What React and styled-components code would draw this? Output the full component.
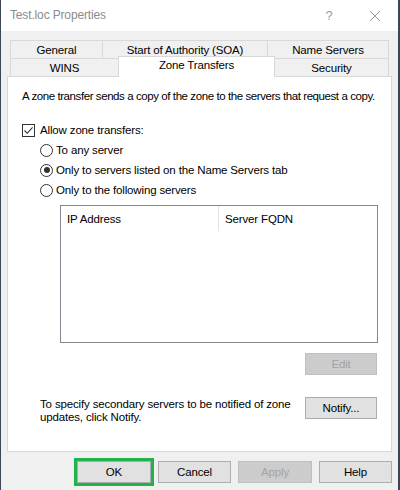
import React from "react";
import styled, { createGlobalStyle, css } from "styled-components";

const GlobalStyle = createGlobalStyle`
  html, body {
    margin: 0;
    padding: 0;
    background: #3c4656;
  }
  body {
    font-family: "Liberation Sans", Arial, sans-serif;
    font-size: 11.5px;
    letter-spacing: -0.15px;
    color: #000;
  }
`;

const Window = styled.div`
  width: 397px;
  height: 490px;
  margin-left: 1px;
  background: #f0f0f0;
  display: flex;
  flex-direction: column;
  box-sizing: border-box;
`;

const TitleBar = styled.div`
  height: 31px;
  background: #fff;
  display: flex;
  align-items: center;
  padding-left: 9px;
  flex-shrink: 0;
`;

const Title = styled.div`
  flex: 1;
  color: #8c8c8c;
  font-size: 12px;
  padding-bottom: 1px;
`;

const TitleButton = styled.div`
  width: 46px;
  height: 31px;
  display: flex;
  align-items: center;
  justify-content: center;
  color: #9a9a9a;
  font-size: 13px;
`;

const Body = styled.div`
  flex: 1;
  padding: 9px 6px 0 6px;
  display: flex;
  flex-direction: column;
`;

const TabStrip = styled.div`
  display: flex;
  flex-direction: column;
  padding: 0 3px;
  position: relative;
  z-index: 1;
`;

const TabRow = styled.div`
  display: flex;
  height: 18px;
`;

const Tab = styled.div`
  width: ${(p) => p.$w}px;
  box-sizing: border-box;
  border: 1px solid #d9d9d9;
  border-bottom: none;
  margin-left: -1px;
  background: #f0f0f0;
  display: flex;
  align-items: center;
  justify-content: center;
  padding-top: 1px;
  &:first-child {
    margin-left: 0;
  }
  ${(p) =>
    p.$active &&
    css`
      background: #fff;
      height: 21px;
      margin-top: -2px;
      position: relative;
      z-index: 2;
      align-items: flex-start;
      padding-top: 2px;
    `}
`;

const Panel = styled.div`
  height: 376px;
  box-sizing: border-box;
  background: #fff;
  border: 1px solid #d9d9d9;
  padding: 13px 0 0 14px;
  display: flex;
  flex-direction: column;
`;

const Intro = styled.div`
  white-space: nowrap;
  letter-spacing: -0.42px;
  margin-bottom: 19px;
`;

const CheckRow = styled.label`
  display: flex;
  align-items: center;
  gap: 5px;
  height: 18px;
  margin-bottom: 1px;
`;

const CheckBox = styled.span`
  width: 11px;
  height: 11px;
  border: 1px solid #333;
  display: flex;
  align-items: center;
  justify-content: center;
`;

const Options = styled.div`
  display: flex;
  flex-direction: column;
  padding-left: 18px;
`;

const RadioRow = styled.label`
  display: flex;
  align-items: center;
  gap: 3px;
  height: 20px;
`;

const Radio = styled.span`
  width: 11px;
  height: 11px;
  border: 1px solid #333;
  border-radius: 50%;
  display: flex;
  align-items: center;
  justify-content: center;
  &::after {
    content: "";
    width: 6px;
    height: 6px;
    border-radius: 50%;
    background: ${(p) => (p.$checked ? "#333" : "transparent")};
  }
`;

const ListBox = styled.div`
  margin: 5px 0 0 20px;
  width: 318px;
  height: 138px;
  box-sizing: border-box;
  border: 1px solid #828790;
  display: flex;
  align-items: flex-start;
`;

const ListHeader = styled.div`
  width: ${(p) => p.$w}px;
  height: 25px;
  box-sizing: border-box;
  padding-left: 6px;
  display: flex;
  align-items: center;
  border-right: 1px solid #e5e5e5;
  &:last-child {
    border-right: none;
  }
`;

const EditRow = styled.div`
  display: flex;
  justify-content: flex-end;
  padding-right: 14px;
  margin-top: 10px;
`;

const NotifyRow = styled.div`
  display: flex;
  align-items: flex-start;
  justify-content: space-between;
  padding: 0 14px 0 18px;
  margin-top: 22px;
`;

const NotifyText = styled.div`
  line-height: 13px;
  padding-top: 1px;
`;

const Button = styled.button`
  width: ${(p) => p.$w || 72}px;
  height: 22px;
  box-sizing: border-box;
  background: #e1e1e1;
  border: 1px solid #adadad;
  font-family: "Liberation Sans", Arial, sans-serif;
  font-size: 11.5px;
  letter-spacing: -0.15px;
  color: #000;
  padding: 0;
  ${(p) =>
    p.disabled &&
    css`
      background: #cccccc;
      border-color: #bfbfbf;
      color: #a3a3a3;
    `}
  ${(p) =>
    p.$focus &&
    css`
      box-shadow: 0 0 0 3px #22b24c;
    `}
`;

const Footer = styled.div`
  display: flex;
  justify-content: flex-end;
  gap: 7px;
  padding: 9px 0 0 0;
`;

const Check = () => (
  <svg width="11" height="11" viewBox="0 0 11 11">
    <path d="M1.5 5.5 L4.2 8.3 L9.6 2.3" fill="none" stroke="#333" strokeWidth="1.1" />
  </svg>
);

const Close = () => (
  <svg width="12" height="12" viewBox="0 0 12 12">
    <path d="M1 1 L11 11 M11 1 L1 11" stroke="#9a9a9a" strokeWidth="1" />
  </svg>
);

export default function App() {
  return (
    <>
      <GlobalStyle />
      <Window>
        <TitleBar>
          <Title>Test.loc Properties</Title>
          <TitleButton>?</TitleButton>
          <TitleButton>
            <Close />
          </TitleButton>
        </TitleBar>
        <Body>
          <TabStrip>
            <TabRow>
              <Tab $w={93}>General</Tab>
              <Tab $w={166}>Start of Authority (SOA)</Tab>
              <Tab $w={122}>Name Servers</Tab>
            </TabRow>
            <TabRow>
              <Tab $w={109}>WINS</Tab>
              <Tab $w={157} $active>Zone Transfers</Tab>
              <Tab $w={115}>Security</Tab>
            </TabRow>
          </TabStrip>
          <Panel>
            <Intro>
              A zone transfer sends a copy of the zone to the servers that request a copy.
            </Intro>
            <CheckRow>
              <CheckBox>
                <Check />
              </CheckBox>
              Allow zone transfers:
            </CheckRow>
            <Options>
              <RadioRow>
                <Radio />
                To any server
              </RadioRow>
              <RadioRow>
                <Radio $checked />
                Only to servers listed on the Name Servers tab
              </RadioRow>
              <RadioRow>
                <Radio />
                Only to the following servers
              </RadioRow>
              <ListBox>
                <ListHeader $w={158}>IP Address</ListHeader>
                <ListHeader $w={158}>Server FQDN</ListHeader>
              </ListBox>
            </Options>
            <EditRow>
              <Button $w={72} disabled>
                Edit
              </Button>
            </EditRow>
            <NotifyRow>
              <NotifyText>
                To specify secondary servers to be notified of zone
                <br />
                updates, click Notify.
              </NotifyText>
              <Button $w={72}>Notify...</Button>
            </NotifyRow>
          </Panel>
          <Footer>
            <Button $w={74} $focus>
              OK
            </Button>
            <Button $w={73}>Cancel</Button>
            <Button $w={74} disabled>
              Apply
            </Button>
            <Button $w={73}>Help</Button>
          </Footer>
        </Body>
      </Window>
    </>
  );
}
